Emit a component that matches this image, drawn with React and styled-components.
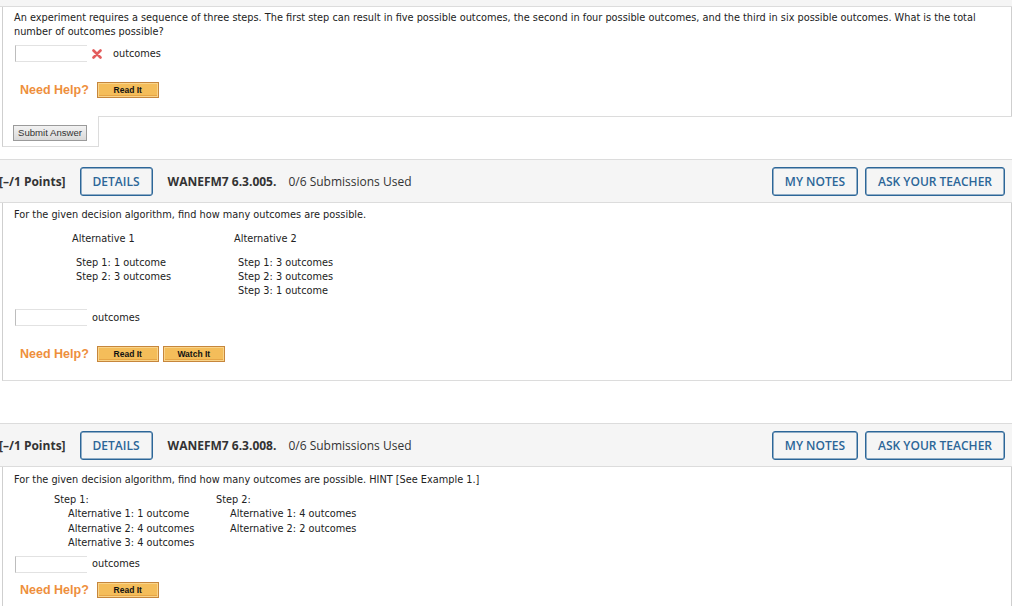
import styled, { createGlobalStyle } from "styled-components";

const GlobalStyle = createGlobalStyle`
	body {
		margin: 0;
		background: #fff;
		overflow: hidden;
	}
	* {
		box-sizing: border-box;
	}
`;

const Page = styled.div`
	width: 1012px;
	display: flex;
	flex-direction: column;
`;

const Header = styled.div`
	display: flex;
	align-items: center;
	height: 44px;
	margin-top: ${(p) => p.$top}px;
	padding-right: ${(p) => p.$right || 7}px;
	background: #f5f5f5;
	border-top: 1px solid #dcdcdc;
	border-bottom: 1px solid #dcdcdc;
	font-family: "Open Sans", sans-serif;
	font-size: 12px;
	color: #333;
`;

const Points = styled.span`
	margin-left: -1px;
	margin-right: 14px;
	font-weight: 700;
`;

const Code = styled.span`
	margin-left: 15px;
	margin-right: 12px;
	font-weight: 700;
`;

const Spacer = styled.div`
	flex: 1;
`;

const HeaderButton = styled.button`
	height: 29px;
	width: ${(p) => (p.$w ? `${p.$w}px` : "auto")};
	padding: 0 12px;
	margin-left: ${(p) => p.$gap || 0}px;
	border: 1px solid #2c6698;
	border-radius: 3px;
	background: transparent;
	font-family: "Open Sans", sans-serif;
	font-size: 12px;
	font-weight: 600;
	color: #2c6698;
	box-shadow: inset 0 0 0 0.5px #2c6698;
`;

const Body = styled.div`
	margin-left: 2px;
	padding: ${(p) => p.$topPad || 4}px 0 ${(p) => p.$bottom || 0}px 11px;
	border-left: 1px solid #cfcfcf;
	border-right: 1px solid #cfcfcf;
	border-bottom: ${(p) => (p.$closed ? "1px solid #dcdcdc" : "none")};
	font-family: "DejaVu Sans", Verdana, sans-serif;
	font-size: 9.75px;
	line-height: 14px;
	color: #222;
`;

const Text = styled.div`
	white-space: nowrap;
`;

const Columns = styled.div`
	display: grid;
	grid-template-columns: 162px 162px;
	margin-top: ${(p) => p.$top}px;
	margin-left: ${(p) => p.$left}px;
`;

const Title = styled.div``;

const Lines = styled.div`
	margin-top: ${(p) => p.$top || 0}px;
	padding-left: ${(p) => p.$indent}px;
	line-height: ${(p) => p.$lh || 14}px;
`;

const AnswerRow = styled.div`
	display: flex;
	align-items: center;
	margin-top: ${(p) => p.$top}px;
`;

const Input = styled.div`
	width: 72px;
	height: 17px;
	margin-left: 1px;
	border-top: 1px solid #e2e2e2;
	border-bottom: 1px solid #e2e2e2;
	border-left: 1px solid #bdbdbd;
`;

const Wrong = styled.svg`
	width: 10px;
	height: 10px;
	margin-left: 5px;
	margin-top: 1px;
`;

const Unit = styled.span`
	margin-left: ${(p) => p.$gap}px;
`;

const HelpRow = styled.div`
	display: flex;
	align-items: center;
	margin-top: ${(p) => p.$top}px;
	padding-left: 6px;
`;

const HelpLabel = styled.span`
	margin-right: 8px;
	font-family: "Liberation Sans", Arial, sans-serif;
	font-size: 12.5px;
	font-weight: 700;
	color: #ee8f3c;
`;

const HelpButton = styled.button`
	width: 62px;
	height: 16px;
	margin-right: 4px;
	padding: 0;
	border: 1px solid #c6863c;
	background: #f4bd5a;
	box-shadow: inset 0 0 0 1px #f9d48a, inset 0 -1px 0 1px #e6a546;
	font-family: "Liberation Sans", Arial, sans-serif;
	font-size: 8.5px;
	font-weight: 700;
	color: #111;
	line-height: 14px;
`;

const SubmitRow = styled.div`
	display: flex;
	margin-left: 2px;
`;

const SubmitTab = styled.div`
	width: 97px;
	height: 31px;
	padding: 6px 0 0 10px;
	border-left: 1px solid #cfcfcf;
	border-right: 1px solid #dcdcdc;
	border-bottom: 1px solid #dcdcdc;
`;

const SubmitFill = styled.div`
	flex: 1;
	border-top: 1px solid #dcdcdc;
`;

const SubmitButton = styled.button`
	width: 74px;
	height: 16px;
	padding: 0;
	border: 1px solid #9a9a9a;
	background: linear-gradient(#f2f2f2, #d9d9d9);
	font-family: "Liberation Sans", Arial, sans-serif;
	font-size: 9.6px;
	color: #333;
`;

const QuestionHeader = ({ top, code }) => (
	<Header $top={top}>
		<Points>[–/1 Points]</Points>
		<HeaderButton>DETAILS</HeaderButton>
		<Code>{code}</Code>
		<span>0/6 Submissions Used</span>
		<Spacer />
		<HeaderButton>MY NOTES</HeaderButton>
		<HeaderButton $gap={7}>ASK YOUR TEACHER</HeaderButton>
	</Header>
);

// header of the previous question, scrolled almost out of view: only the button bottoms show
const ScrolledHeader = () => (
	<Header $top={-37} $right={10} aria-hidden="true">
		<HeaderButton $w={71} $gap={82} />
		<HeaderButton $w={139} $gap={10} />
		<Spacer />
		<HeaderButton $w={84} />
		<HeaderButton $w={138} $gap={9} />
	</Header>
);

const NeedHelp = ({ top, watch }) => (
	<HelpRow $top={top}>
		<HelpLabel>Need Help?</HelpLabel>
		<HelpButton>Read It</HelpButton>
		{watch && <HelpButton>Watch It</HelpButton>}
	</HelpRow>
);

const App = () => {
	return (
		<Page>
			<GlobalStyle />
			<ScrolledHeader />
			<Body $bottom={18}>
				<Text>
					An experiment requires a sequence of three steps. The first step can result in five
					possible outcomes, the second in four possible outcomes, and the third in six possible
					outcomes. What is the total
					<br />
					number of outcomes possible?
				</Text>
				<AnswerRow $top={6}>
					<Input />
					<Wrong viewBox="0 0 10 10">
						<path
							d="M1.5 1.5 L8.5 8.5 M8.5 1.5 L1.5 8.5"
							stroke="#e35d5d"
							strokeWidth="2.6"
							strokeLinecap="round"
						/>
					</Wrong>
					<Unit $gap={11}>outcomes</Unit>
				</AnswerRow>
				<NeedHelp top={20} />
			</Body>
			<SubmitRow>
				<SubmitTab>
					<SubmitButton>Submit Answer</SubmitButton>
				</SubmitTab>
				<SubmitFill />
			</SubmitRow>

			<QuestionHeader top={12} code="WANEFM7 6.3.005." />
			<Body $topPad={5} $bottom={18} $closed>
				<Text>For the given decision algorithm, find how many outcomes are possible.</Text>
				<Columns $top={10} $left={58}>
					<div>
						<Title>Alternative 1</Title>
						<Lines $top={10} $indent={4}>
							<div>Step 1: 1 outcome</div>
							<div>Step 2: 3 outcomes</div>
						</Lines>
					</div>
					<div>
						<Title>Alternative 2</Title>
						<Lines $top={10} $indent={4}>
							<div>Step 1: 3 outcomes</div>
							<div>Step 2: 3 outcomes</div>
							<div>Step 3: 1 outcome</div>
						</Lines>
					</div>
				</Columns>
				<AnswerRow $top={11}>
					<Input />
					<Unit $gap={5}>outcomes</Unit>
				</AnswerRow>
				<NeedHelp top={20} watch />
			</Body>

			<QuestionHeader top={42} code="WANEFM7 6.3.008." />
			<Body $topPad={6} $bottom={20}>
				<Text>
					For the given decision algorithm, find how many outcomes are possible. HINT [See Example
					1.]
				</Text>
				<Columns $top={6} $left={40}>
					<div>
						<Title>Step 1:</Title>
						<Lines $indent={14} $lh={14.5}>
							<div>Alternative 1: 1 outcome</div>
							<div>Alternative 2: 4 outcomes</div>
							<div>Alternative 3: 4 outcomes</div>
						</Lines>
					</div>
					<div>
						<Title>Step 2:</Title>
						<Lines $indent={14} $lh={14.5}>
							<div>Alternative 1: 4 outcomes</div>
							<div>Alternative 2: 2 outcomes</div>
						</Lines>
					</div>
				</Columns>
				<AnswerRow $top={5}>
					<Input />
					<Unit $gap={5}>outcomes</Unit>
				</AnswerRow>
				<NeedHelp top={9} />
			</Body>
		</Page>
	);
};

export default App;
